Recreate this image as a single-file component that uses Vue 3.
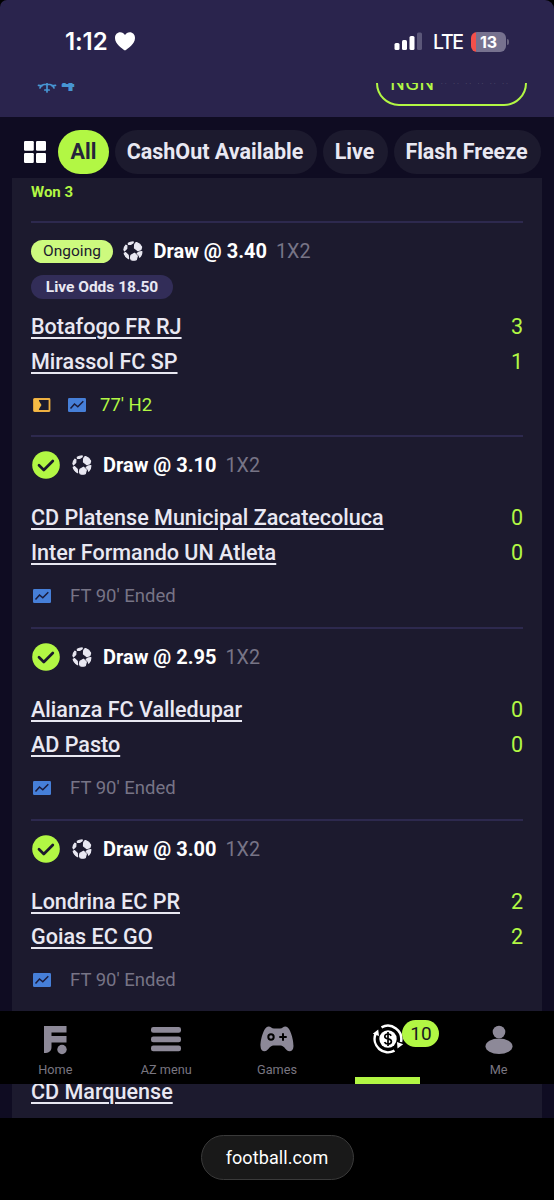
<script setup>
const filters = [
  { label: 'All', cls: 'all' },
  { label: 'CashOut Available', cls: 'cash' },
  { label: 'Live', cls: 'live' },
  { label: 'Flash Freeze', cls: 'flash' },
]

const matches = [
  { live: true, odds: '3.40', liveOdds: '18.50', home: 'Botafogo FR RJ', away: 'Mirassol FC SP', hs: 3, as: 1, status: "77' H2" },
  { odds: '3.10', home: 'CD Platense Municipal Zacatecoluca', away: 'Inter Formando UN Atleta', hs: 0, as: 0, status: "FT 90' Ended" },
  { odds: '2.95', home: 'Alianza FC Valledupar', away: 'AD Pasto', hs: 0, as: 0, status: "FT 90' Ended" },
  { odds: '3.00', home: 'Londrina EC PR', away: 'Goias EC GO', hs: 2, as: 2, status: "FT 90' Ended" },
]
</script>

<template>
  <div class="screen">
    <header class="top">
      <div class="statusbar">
        <div class="clock">
          <span class="time">1:12</span>
          <svg class="heart" width="20" height="19" viewBox="0 0 20 19"><path d="M10 18.500C7 16.200 0 11.800 0 5.900 0 2.600 2.300.3 5.200.3 7.300.3 9 1.400 10 3.100 11 1.400 12.700.3 14.800.3 17.700.3 20 2.600 20 5.900 20 11.800 13 16.200 10 18.500Z" fill="#fff" /></svg>
        </div>
        <div class="signals">
          <svg width="28" height="19" viewBox="0 0 28 19">
            <rect x="0.500" y="11" width="5" height="7" rx="1.500" fill="#fff" />
            <rect x="8" y="8" width="5" height="10" rx="1.500" fill="#fff" />
            <rect x="15.500" y="4" width="5" height="14" rx="1.500" fill="#fff" />
            <rect x="23" y="0.500" width="5" height="17.500" rx="1.500" fill="#5b5779" />
          </svg>
          <span class="lte">LTE</span>
          <div class="battery"><span>13</span></div>
          <i class="cap"></i>
        </div>
      </div>
      <div class="account">
        <div class="freeze">
          <svg width="20" height="20" viewBox="0 0 20 20" fill="none" stroke="#4795d2" stroke-width="1.700" stroke-linecap="round">
            <path d="M10 1v18M3 15q1-3 4-3.500h6q3 .5 4 3.500M7.800 17h4.400M1.500 12.300l3.500.5M18.500 12.300l-3.500.5" />
          </svg>
          <b>4</b>
        </div>
        <div class="balance"><span>NGN</span><span class="stars">******</span></div>
      </div>
    </header>

    <nav class="filters">
      <svg class="grid" width="22" height="22" viewBox="0 0 22 22" fill="#fff">
        <rect width="9.800" height="9.800" rx="1.200" /><rect x="12" width="10" height="9.800" rx="1.200" />
        <rect y="12" width="9.800" height="10" rx="1.200" /><rect x="12" y="12" width="10" height="10" rx="1.200" />
      </svg>
      <span v-for="f in filters" :key="f.label" class="chip" :class="f.cls"><span>{{ f.label }}</span></span>
    </nav>

    <main class="content">
      <section class="card">
        <div class="won">Won 3</div>
        <article v-for="m in matches" :key="m.home" class="match" :class="{ ongoing: m.live }">
          <div class="pick">
            <span v-if="m.live" class="badge">Ongoing</span>
            <svg v-else class="check" width="28" height="28" viewBox="0 0 28 28">
              <circle cx="14" cy="14" r="13.800" fill="#b2f744" />
              <path d="M7 14.300l4.800 4.700 9-9" fill="none" stroke="#1b192d" stroke-width="2.700" stroke-linecap="round" stroke-linejoin="round" />
            </svg>
            <svg class="ball" width="20" height="20" viewBox="0 0 20 20" fill="#e9e8f2" stroke="#e9e8f2" stroke-width="1.200" stroke-linejoin="round">
              <path d="M5.300 2.300C6.700 1.300 8.200.9 10.200.9L10.200 1.800 8 3.300 5.400 3.300Z" />
              <path d="M12.500 2L13.600 1.500C15.900 2.300 17.700 4 18.600 6L17.900 8.700 14.700 9.600 11.500 7 11.600 4Z" />
              <path d="M.9 8.800C1 7 1.700 5.400 2.900 4.200L3.900 4.800 3.700 7.600 1.500 9.800Z" />
              <path d="M1.200 12.200L2.600 11.600 5.200 14.200 5.600 17.700C3.400 16.500 1.700 14.700 1.200 12.200Z" />
              <path d="M8 14.200L11.500 12.300 14.300 15 13.300 18.700C11.500 19.400 9.600 19.300 8.200 18.700L7.500 16.700Z" />
              <path d="M14.200 12.500L15.800 11.100 18.900 10.500C18.900 12.800 18.100 14.700 16.700 16.200L16.200 14.600Z" />
            </svg>
            <span class="draw">Draw @ {{ m.odds }}</span>
            <span class="market">1X2</span>
          </div>
          <div v-if="m.live" class="liveodds"><span>Live Odds {{ m.liveOdds }}</span></div>
          <div class="team"><span class="name">{{ m.home }}</span><span class="score">{{ m.hs }}</span></div>
          <div class="team"><span class="name">{{ m.away }}</span><span class="score">{{ m.as }}</span></div>
          <div class="info">
            <svg v-if="m.live" class="pitch" width="18" height="14" viewBox="0 0 18 14">
              <rect x="1" y="1" width="15.500" height="12" rx=".5" fill="none" stroke="#eeb041" stroke-width="1.800" />
              <path d="M1 1h4.500l.8 2.500L8.500 7l-2.200 3.500-.8 2.500H1Z" fill="#f5bb45" />
            </svg>
            <svg class="chart" width="18" height="14" viewBox="0 0 18 14">
              <rect width="18" height="14" rx="1.200" fill="#467fd8" />
              <path d="M2.500 10.500L6.500 6l3.300 2.800 5.500-5.600" fill="none" stroke="#1b1b3a" stroke-width="1.500" />
            </svg>
            <span class="status">{{ m.status }}</span>
          </div>
        </article>
        <article class="match next">
          <div class="team"><span class="name">CD Marquense</span></div>
        </article>
      </section>

      <nav class="tabs">
        <div class="tab">
          <svg width="26" height="30" viewBox="0 0 26 30" fill="#8d8998">
            <path d="M2 1H24.500V7.500H9.500V11H24.500V17.500H9.500V22C9.500 26 7 28 2 28Z" /><circle cx="20" cy="24.500" r="4.700" />
          </svg>
          <span>Home</span>
        </div>
        <div class="tab">
          <svg width="30" height="30" viewBox="0 0 30 30" fill="#8d8998"><rect y="2" width="30" height="5.800" rx="2.300" /><rect y="11.500" width="30" height="5.800" rx="2.300" /><rect y="20.500" width="30" height="5.800" rx="2.300" /></svg>
          <span>AZ menu</span>
        </div>
        <div class="tab">
          <svg width="34" height="30" viewBox="0 0 34 30">
            <path d="M8.500 1.500C11 1.500 11.500 3.500 14 3.500H20C22.500 3.500 23 1.500 25.500 1.500C30 1.500 33.500 14 33.500 21C33.500 24.500 31.800 26.300 29.500 26.300C26 26.300 24.500 20.500 20.500 20.500H13.500C9.500 20.500 8 26.300 4.500 26.300C2.200 26.300.5 24.500.5 21C.5 14 4 1.500 8.500 1.500Z" fill="#8d8998" />
            <circle cx="11" cy="12" r="2.700" fill="none" stroke="#000" stroke-width="2" /><path d="M23 8.300v7.400M19.300 12h7.400" stroke="#000" stroke-width="2" />
          </svg>
          <span>Games</span>
        </div>
        <div class="tab active">
          <svg width="32" height="32" viewBox="0 0 32 32">
            <circle cx="16" cy="16" r="8.700" fill="#fff" />
            <path d="M19.200 12.700C18.500 11.500 17.300 11 16 11C14.200 11 12.800 11.900 12.800 13.400C12.800 17 19.400 14.900 19.400 18.500C19.400 20.200 17.900 21 16 21C14.400 21 13.200 20.500 12.500 19.100M16 9v14" fill="none" stroke="#000" stroke-width="1.700" />
            <path d="M9.500 4.300A13.500 13.500 0 0 1 29 19M22.500 27.700A13.500 13.500 0 0 1 3.500 11" fill="none" stroke="#fff" stroke-width="2.500" />
            <path d="M.8 10.700L6.200 6.500 7 13ZM31.200 21.300L25.500 25.500 25 19Z" fill="#fff" />
          </svg>
          <b class="count">10</b>
          <i class="bar"></i>
        </div>
        <div class="tab">
          <svg width="28" height="30" viewBox="0 0 28 30" fill="#8d8998"><circle cx="14" cy="7" r="6.300" /><ellipse cx="14" cy="21.300" rx="13.500" ry="7.700" /></svg>
          <span>Me</span>
        </div>
      </nav>
    </main>

    <footer class="browser"><div class="url">football.com</div></footer>
  </div>
</template>

<style>
body { margin: 0; background: #000; }
</style>

<style scoped>
.screen { width: 554px; height: 1200px; overflow: hidden; display: flex; flex-direction: column; background: #000; font-family: Roboto, "Liberation Sans", sans-serif; }
svg { display: block; flex: none; }
.top { height: 117px; flex: none; background: #2a244d; border-radius: 7px 9px 0 0; }
.statusbar { height: 83px; display: flex; justify-content: space-between; box-sizing: border-box; padding: 0 45px 0 65px; font-family: Inter, sans-serif; color: #fff; }
.clock { display: flex; padding-top: 28px; height: 28px; align-items: center; gap: 6px; }
.time { font-size: 24px; font-weight: 600; line-height: 27px; letter-spacing: -.1px; width: 44px; white-space: nowrap; margin-top: -1px; }
.heart { margin-top: -1px; }
.signals { display: flex; padding-top: 28px; height: 28px; align-items: center; }
.signals svg { margin-top: -1px; }
.lte { font-size: 19.5px; font-weight: 500; margin-left: 11px; width: 38px; letter-spacing: -1.3px; }
.battery { width: 35px; height: 20px; border-radius: 6px; background: linear-gradient(90deg, #f4504a 5px, #77728f 5px); font-size: 16px; font-weight: 700; line-height: 20px; text-align: center; margin-top: -1px; }
.cap { width: 2px; height: 6px; border-radius: 0 2px 2px 0; background: #68637f; margin-left: 1px; }
.account { height: 34px; overflow: hidden; display: flex; align-items: flex-start; justify-content: space-between; padding: 0 27px 0 37px; }
.freeze { display: flex; align-items: center; gap: 4px; margin-top: -12px; color: #4795d2; }
.freeze b { font-size: 24px; line-height: 24px; font-weight: 900; }
.balance { box-sizing: border-box; width: 151px; height: 46px; margin-top: -23px; border: 2px solid #b2f744; border-radius: 23px; color: #b2f744; font-size: 21px; line-height: 42px; padding: 0 0 0 12px; display: flex; gap: 5px; }
.balance span:first-child { font-size: 21px; margin-top: 0; }
.stars { color: #8b8e9a; letter-spacing: 3.2px; font-size: 21px; line-height: 42px; }

.filters { height: 61px; flex: none; background: #0f0c22; display: flex; align-items: center; padding: 9px 0 0 24px; box-sizing: border-box; }
.chip { height: 44px; border-radius: 22px; background: #1c1a2e; color: #e9e8f2; font-size: 21.5px; font-weight: 700; display: flex; align-items: center; justify-content: center; white-space: nowrap; margin-left: 6px; flex: none; box-sizing: border-box; padding: 0 2px 1px 0; }
.grid { margin-top: -1px; }
.chip.all { width: 51px; margin-left: 12px; padding-right: 0; background: #b2f744; color: #25233b; }
.chip.cash { width: 202px; }
.chip.live { width: 65px; }
.chip.flash { width: 147px; }

.content { position: relative; height: 940px; flex: none; overflow: hidden; background: #0f0c22; padding: 0 12px; }
.card { background: #1c1a2e; padding: 0 19px; }
.won { height: 43px; line-height: 29px; font-size: 15px; font-weight: 700; color: #b2f744; }
.match { box-sizing: border-box; height: 192px; border-top: 2px solid #2d294e; padding-top: 13px; }
.match.ongoing { height: 214px; padding-top: 13px; }
.match.next { padding-top: 61px; height: 300px; }
.pick { display: flex; align-items: center; height: 30px; margin-bottom: 20px; }
.ongoing .pick { margin-bottom: 9px; }
.badge { width: 82px; height: 23px; border-radius: 12px; background: #cdfa7e; color: #1c1a2e; font-size: 15.500px; line-height: 23px; text-align: center; margin-right: 10.500px; }
.check { margin: 0 13px 0 1px; }
.ball { margin-left: -1px; }
.draw { font-size: 20px; font-weight: 700; color: #fff; margin: 0 9px 0 11px; white-space: nowrap; }
.market { font-size: 19.7px; color: #777486; }
.liveodds { width: 142px; height: 24px; border-radius: 12px; background: #322d58; color: #e9e8f2; font-size: 15.5px; font-weight: 700; line-height: 24px; text-align: center; margin-bottom: 10px; }
.team { display: flex; justify-content: space-between; align-items: center; height: 35px; font-size: 21.55px; }
.name { color: #e9e8f2; font-weight: 500; text-decoration: underline; text-decoration-thickness: 1.5px; text-underline-offset: 2.5px; text-decoration-skip-ink: auto; white-space: nowrap; }
.score { color: #b2f744; }
.info { display: flex; align-items: center; height: 20px; margin-top: 16px; padding-left: 2px; }
.pitch { margin-right: 17px; }
.status { margin-left: 19px; font-size: 18.5px; color: #777486; }
.ongoing .status { color: #b2f744; margin-left: 14px; }

.tabs { position: absolute; left: 0; top: 833px; width: 554px; height: 73px; background: #000; display: grid; grid-template-columns: repeat(5, 1fr); }
.tab { position: relative; display: flex; flex-direction: column; align-items: center; padding-top: 14px; color: #797681; font-size: 12.7px; line-height: 16px; }
.tab span { margin-top: 7px; }
.active { padding-top: 12px; }
.count { position: absolute; left: 70px; top: 9px; width: 37px; height: 27px; border-radius: 14px; background: #b2f744; color: #17161f; font-size: 19px; font-weight: 400; line-height: 27px; text-align: center; }
.bar { position: absolute; left: 22.5px; bottom: 0; width: 65px; height: 7px; background: #b2f744; }
.browser { flex: 1; display: flex; justify-content: center; align-items: flex-start; padding-top: 17px; }
.url { box-sizing: border-box; width: 153px; height: 45px; border: 1px solid #3a3a3a; border-radius: 23px; background: #191919; color: #fff; font-size: 18px; letter-spacing: .1px; line-height: 44px; text-align: center; }
</style>
